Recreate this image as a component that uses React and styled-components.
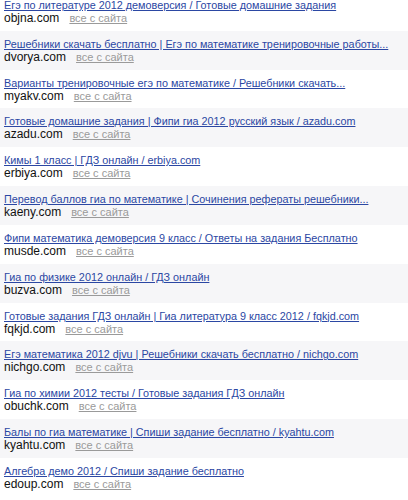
import React from 'react';
import styled, { createGlobalStyle } from 'styled-components';

const GlobalStyle = createGlobalStyle`
    html, body {
        margin: 0;
        padding: 0;
        background: #fff;
        overflow: hidden;
    }
`;

const results = [
    { title: 'Егэ по литературе 2012 демоверсия / Готовые домашние задания', site: 'objna.com' },
    { title: 'Решебники скачать бесплатно | Егэ по математике тренировочные работы...', site: 'dvorya.com' },
    { title: 'Варианты тренировочные егэ по математике / Решебники скачать...', site: 'myakv.com' },
    { title: 'Готовые домашние задания | Фипи гиа 2012 русский язык / azadu.com', site: 'azadu.com' },
    { title: 'Кимы 1 класс | ГДЗ онлайн / erbiya.com', site: 'erbiya.com' },
    { title: 'Перевод баллов гиа по математике | Сочинения рефераты решебники...', site: 'kaeny.com' },
    { title: 'Фипи математика демоверсия 9 класс / Ответы на задания Бесплатно', site: 'musde.com' },
    { title: 'Гиа по физике 2012 онлайн / ГДЗ онлайн', site: 'buzva.com' },
    { title: 'Готовые задания ГДЗ онлайн | Гиа литература 9 класс 2012 / fqkjd.com', site: 'fqkjd.com' },
    { title: 'Егэ математика 2012 djvu | Решебники скачать бесплатно / nichgo.com', site: 'nichgo.com' },
    { title: 'Гиа по химии 2012 тесты / Готовые задания ГДЗ онлайн', site: 'obuchk.com' },
    { title: 'Балы по гиа математике | Спиши задание бесплатно / kyahtu.com', site: 'kyahtu.com' },
    { title: 'Алгебра демо 2012 / Спиши задание бесплатно', site: 'edoup.com' },
];

const List = styled.div`
    margin-top: -8px;
    font-family: "Liberation Sans", Arial, sans-serif;
`;

const Row = styled.div`
    height: 38.83px;
    box-sizing: border-box;
    padding: 7px 4px 0;
    background: ${props => (props.shaded ? '#f6f6f8' : '#fff')};
`;

const Title = styled.a`
    display: block;
    font-size: 10.8px;
    line-height: 13px;
    color: #2b47a3;
    text-decoration: underline;
    white-space: nowrap;
`;

const Meta = styled.div`
    display: flex;
    align-items: baseline;
    gap: 10px;
    line-height: 13px;
`;

const Site = styled.span`
    font-size: 12px;
    color: #111;
`;

const SiteLink = styled.a`
    font-size: 11px;
    color: #9a9a9a;
    text-decoration: underline;
`;

export default function App() {
    return (
        <>
            <GlobalStyle />
            <List>
                {results.map((item, i) => (
                    <Row key={item.site} shaded={i % 2 === 1}>
                        <Title href="#">{item.title}</Title>
                        <Meta>
                            <Site>{item.site}</Site>
                            <SiteLink href="#">все с сайта</SiteLink>
                        </Meta>
                    </Row>
                ))}
            </List>
        </>
    );
}
